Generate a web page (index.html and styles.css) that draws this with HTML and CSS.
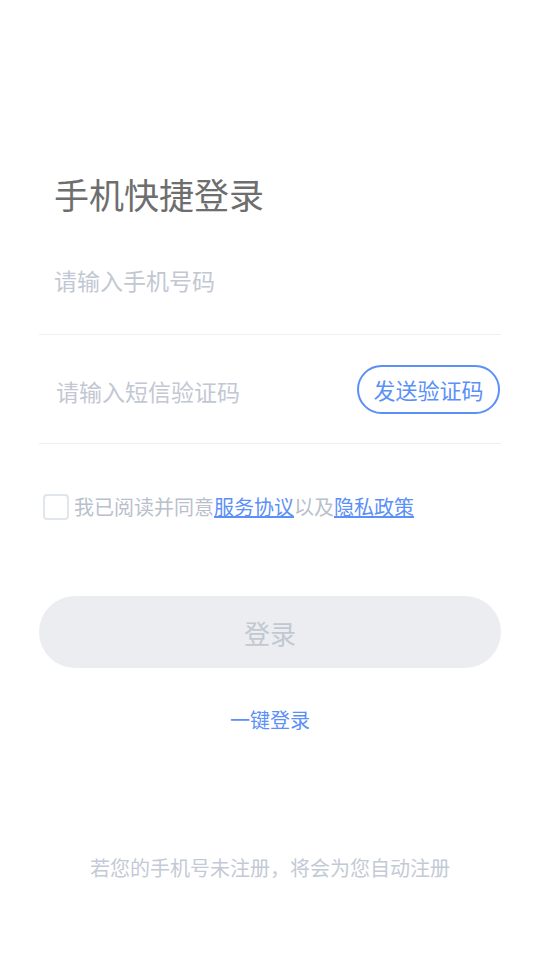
FILE: index.html
```html
<!DOCTYPE html>
<html lang="zh-CN">
<head>
    <meta charset="UTF-8">
    <meta name="viewport" content="width=device-width, initial-scale=1.0">
    <title>手机快捷登录</title>
    <link rel="stylesheet" href="styles.css">
</head>
<body>
    <main class="login">
        <h1 class="title">手机快捷登录</h1>

        <div class="field">
            <input class="field-input" type="tel" placeholder="请输入手机号码">
        </div>

        <div class="field field-code">
            <input class="field-input" type="text" placeholder="请输入短信验证码">
            <button class="send-btn">发送验证码</button>
        </div>

        <label class="agree">
            <span class="checkbox"></span>
            <span class="agree-text">我已阅读并同意<a href="#">服务协议</a>以及<a href="#">隐私政策</a></span>
        </label>

        <button class="login-btn">登录</button>

        <a class="quick-login" href="#">一键登录</a>

        <p class="tip">若您的手机号未注册，将会为您自动注册</p>
    </main>
</body>
</html>
```

FILE: styles.css
```css
body {
    margin: 0;
    padding: 0;
    background-color: #fff;
    font-family: "Noto Sans CJK SC", "Noto Sans", sans-serif;
}

.login {
    display: flex;
    flex-direction: column;
    padding: 174px 39px 0;
}

.title {
    margin: 0 0 12px 15px;
    font-size: 35px;
    font-weight: 400;
    line-height: 40px;
    color: #6e6e6e;
}

.field {
    display: flex;
    align-items: center;
    justify-content: space-between;
    height: 108px;
    border-bottom: 1px solid #eeeff1;
}

.field-input {
    flex: 1;
    min-width: 0;
    margin-left: 15px;
    padding: 0;
    border: none;
    outline: none;
    background: transparent;
    font-family: inherit;
    font-size: 23px;
    color: #333;
}

.field-input::placeholder {
    color: #c2c8d3;
}

.field-code .field-input {
    margin-left: 17px;
    padding-top: 4px;
}

.send-btn {
    width: 143px;
    height: 49px;
    margin-right: 1px;
    padding: 0;
    border: 2px solid #5b8ff9;
    border-radius: 25px;
    background: #fff;
    font-family: inherit;
    font-size: 22px;
    color: #5b8ff9;
}

.agree {
    display: flex;
    align-items: center;
    margin: 50px 0 0 4px;
}

.checkbox {
    box-sizing: border-box;
    width: 26px;
    height: 26px;
    border: 2px solid #e1e5ec;
    border-radius: 4px;
}

.agree-text {
    margin-left: 5px;
    font-size: 20px;
    line-height: 26px;
    color: #b9c0cc;
}

.agree-text a {
    color: #5b8ff9;
    text-decoration: underline;
}

.login-btn {
    height: 72px;
    margin-top: 76px;
    border: none;
    border-radius: 36px;
    background-color: #ebedf0;
    font-family: inherit;
    font-size: 26px;
    color: #c2c8d2;
}

.quick-login {
    align-self: center;
    margin-top: 38px;
    font-size: 20px;
    line-height: 28px;
    color: #5b8ff9;
    text-decoration: none;
}

.tip {
    margin: 120px 0 0;
    text-align: center;
    font-size: 20px;
    line-height: 28px;
    color: #c3cad6;
}
```
